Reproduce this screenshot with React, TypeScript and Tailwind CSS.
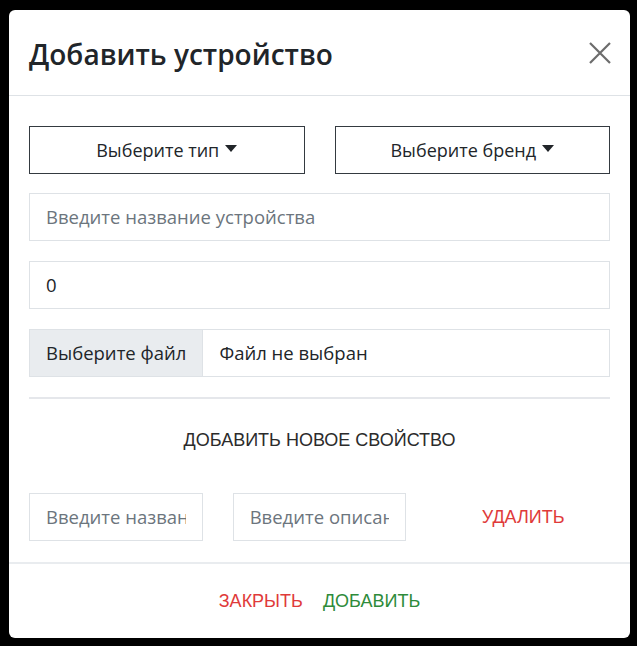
import React from "react";

const sans = "font-['Open_Sans','Noto_Sans',sans-serif]";
const arial = "font-['Liberation_Sans','Roboto',sans-serif]";

function Caret() {
  return (
    <svg width="12" height="8" viewBox="0 0 12 8" className="ml-[6px] mt-[-2px]">
      <path d="M0 0 L12 0 L6 7 Z" fill="#212529" />
    </svg>
  );
}

function Dropdown({ label }: { label: string }) {
  return (
    <button className="flex h-[48px] flex-1 items-center justify-center border border-[#343a40] bg-white text-[18px] text-[#212529]">
      {label}
      <Caret />
    </button>
  );
}

function Field({ placeholder, value }: { placeholder?: string; value?: string }) {
  return (
    <div className="flex h-[48px] items-center border border-[#dee2e6] px-[16px] text-[18.5px]">
      <div className="w-full overflow-hidden whitespace-nowrap">
        {value ? <span className="text-[#212529]">{value}</span> : <span className="text-[#6c757d]">{placeholder}</span>}
      </div>
    </div>
  );
}

export default function App() {
  return (
    <div className={`h-[646px] w-[637px] overflow-hidden bg-black pl-[9px] pt-[10px] ${sans}`}>
      <div className="w-[621px] rounded-[6px] bg-white">
        <div className="flex h-[86px] items-center justify-between border-b border-[#dee2e6] pl-[20px] pr-[19px]">
          <h4 className="mt-[2px] text-[28px] font-semibold text-[#212529]">Добавить устройство</h4>
          <button aria-label="Close">
            <svg width="22" height="22" viewBox="0 0 22 22">
              <path d="M1 1 L21 21 M21 1 L1 21" stroke="#6c6c6c" strokeWidth="2.2" />
            </svg>
          </button>
        </div>

        <div className="px-[20px] pb-[21px] pt-[30px]">
          <div className="flex gap-[30px]">
            <Dropdown label="Выберите тип" />
            <Dropdown label="Выберите бренд" />
          </div>
          <div className="mt-[19px]">
            <Field placeholder="Введите название устройства" />
          </div>
          <div className="mt-[20px]">
            <Field value="0" />
          </div>
          <div className="mt-[20px] flex h-[48px] items-center overflow-hidden border border-[#dee2e6] text-[18.5px] text-[#212529]">
            <span className="flex h-full items-center border-r border-[#dee2e6] bg-[#e9ecef] px-[16px]">Выберите файл</span>
            <span className="px-[16px]">Файл не выбран</span>
          </div>
          <hr className="mt-[20px] border-t-2 border-[#e5e7eb]" />
          <div className={`mt-[20px] flex h-[42px] items-center justify-center text-[18px] uppercase text-[#2b2b2b] ${arial}`}>
            Добавить новое свойство
          </div>
          <div className="mt-[32px] grid grid-cols-3 gap-[30px]">
            <Field placeholder="Введите название" />
            <Field placeholder="Введите описание" />
            <div className={`flex items-center justify-center text-[18px] uppercase text-[#e03a3a] ${arial}`}>Удалить</div>
          </div>
        </div>

        <div className={`flex h-[76px] items-center justify-center gap-[20px] border-t-2 border-[#e9ecef] text-[18px] uppercase ${arial}`}>
          <span className="text-[#e03a3a]">Закрыть</span>
          <span className="text-[#2e8b3a]">Добавить</span>
        </div>
      </div>
    </div>
  );
}
